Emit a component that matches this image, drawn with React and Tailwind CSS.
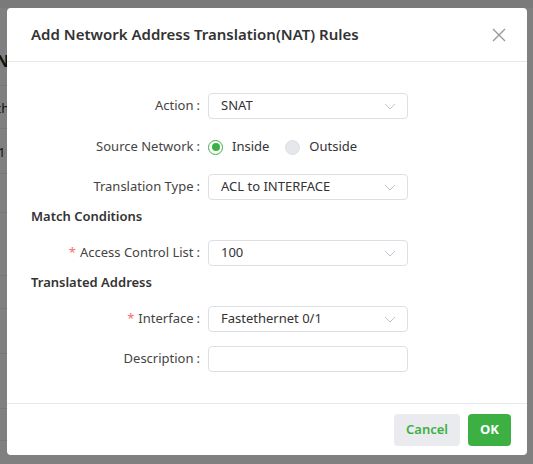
import React from "react";

const font = { fontFamily: '"Noto Sans", "Open Sans", sans-serif' };

function Chevron() {
  return (
    <svg width="12" height="7" viewBox="0 0 12 7" className="shrink-0">
      <path d="M1 1 L6 6 L11 1" fill="none" stroke="#c0c4cc" strokeWidth="1" />
    </svg>
  );
}

function Label({ children, required }) {
  return (
    <div className="w-[177px] shrink-0 pr-[8px] text-right text-[13px] text-[#444]">
      {required && <span className="mr-[4px] text-[#f56c6c]">*</span>}
      {children}
      <span className="ml-[3px]">:</span>
    </div>
  );
}

function Select({ value }) {
  return (
    <div className="flex h-[26px] w-[200px] items-center justify-between rounded-[4px] border border-[#dcdfe6] pl-[12px] pr-[11px] text-[13px] text-[#333]">
      <span>{value}</span>
      <Chevron />
    </div>
  );
}

export default function App() {
  return (
    <div className="relative h-[464px] w-[533px] overflow-hidden bg-[#808080]" style={font}>
      {/* dimmed page behind */}
      <div className="absolute left-0 top-0 h-[8px] w-full bg-[#7a7a7a]" />
      <div className="absolute left-[-4px] top-[49px] text-[16px] font-bold text-[#111]">NAT</div>
      <div className="absolute left-[-5px] top-[99px] text-[13px] text-[#111]">ch</div>
      <div className="absolute left-[-2px] top-[143px] text-[13px] text-[#111]">1</div>
      <div className="absolute left-0 top-[85px] h-px w-[300px] bg-[#777]" />
      <div className="absolute left-0 top-[128px] h-px w-[300px] bg-[#777]" />
      <div className="absolute left-0 top-[173px] h-px w-[300px] bg-[#777]" />
      <div className="absolute left-0 top-[212px] h-px w-[300px] bg-[#777]" />
      <div className="absolute left-0 top-[275px] h-px w-[300px] bg-[#777]" />
      <div className="absolute left-0 top-[308px] h-px w-[300px] bg-[#777]" />
      <div className="absolute left-0 top-[353px] h-px w-[300px] bg-[#777]" />
      <div className="absolute left-0 top-[408px] h-px w-[300px] bg-[#777]" />
      <div className="absolute left-0 top-[440px] h-px w-[300px] bg-[#777]" />

      {/* modal */}
      <div className="absolute left-[7px] top-[8px] flex w-[520px] flex-col rounded-[4px] bg-white">
        <div className="flex h-[54px] items-center justify-between border-b border-[#e8e8e8] pl-[24px] pr-[21px]">
          <div className="text-[15px] font-semibold text-[#333]">Add Network Address Translation(NAT) Rules</div>
          <svg width="14" height="14" viewBox="0 0 14 14">
            <path d="M1 1 L13 13 M13 1 L1 13" stroke="#999" strokeWidth="1.4" fill="none" />
          </svg>
        </div>

        <div className="flex flex-col pl-[24px] pt-[31px] pb-[31px]">
          <div className="flex h-[26px] items-center">
            <Label>Action</Label>
            <Select value="SNAT" />
          </div>
          <div className="mt-[15px] flex h-[26px] items-center">
            <Label>Source Network</Label>
            <div className="flex items-center text-[13px] text-[#333]">
              <span className="flex h-[15px] w-[15px] items-center justify-center rounded-full border-[1.5px] border-[#3cb043] bg-white">
                <span className="h-[8px] w-[8px] rounded-full bg-[#3cb043]" />
              </span>
              <span className="ml-[9px]">Inside</span>
              <span className="ml-[16px] h-[15px] w-[15px] rounded-full border border-[#dcdfe6] bg-[#e6e7eb]" />
              <span className="ml-[9px]">Outside</span>
            </div>
          </div>
          <div className="mt-[14px] flex h-[26px] items-center">
            <Label>Translation Type</Label>
            <Select value="ACL to INTERFACE" />
          </div>
          <div className="mt-[7px] flex h-[20px] items-center text-[13px] font-semibold text-[#333]">Match Conditions</div>
          <div className="mt-[13px] flex h-[26px] items-center">
            <Label required>Access Control List</Label>
            <Select value="100" />
          </div>
          <div className="mt-[7px] flex h-[20px] items-center text-[13px] font-semibold text-[#333]">Translated Address</div>
          <div className="mt-[13px] flex h-[26px] items-center">
            <Label required>Interface</Label>
            <Select value="Fastethernet 0/1" />
          </div>
          <div className="mt-[14px] flex h-[26px] items-center">
            <Label>Description</Label>
            <div className="h-[26px] w-[200px] rounded-[4px] border border-[#dcdfe6]" />
          </div>
        </div>

        <div className="flex h-[52px] items-start justify-end gap-[8px] border-t border-[#e8e8e8] pr-[16px] pt-[10px]">
          <button className="flex h-[32px] w-[66px] items-center justify-center rounded-[4px] bg-[#e9ebee] text-[13px] font-semibold text-[#3cb043]">Cancel</button>
          <button className="flex h-[32px] w-[43px] items-center justify-center rounded-[4px] bg-[#3cb043] text-[13px] font-bold text-white">OK</button>
        </div>
      </div>
    </div>
  );
}
